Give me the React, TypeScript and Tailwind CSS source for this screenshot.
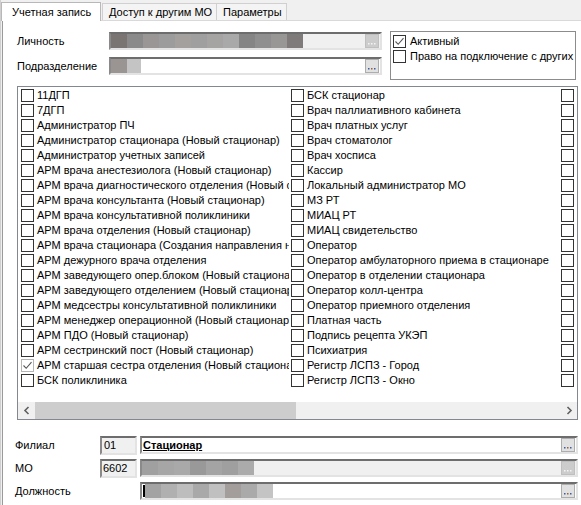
import React from "react";

const leftItems = [
  "11ДГП",
  "7ДГП",
  "Администратор ПЧ",
  "Администратор стационара (Новый стационар)",
  "Администратор учетных записей",
  "АРМ врача анестезиолога (Новый стационар)",
  "АРМ врача диагностического отделения (Новый стационар)",
  "АРМ врача консультанта (Новый стационар)",
  "АРМ врача консультативной поликлиники",
  "АРМ врача отделения (Новый стационар)",
  "АРМ врача стационара (Создания направления на госпитализацию)",
  "АРМ дежурного врача отделения",
  "АРМ заведующего опер.блоком (Новый стационар)",
  "АРМ заведующего отделением (Новый стационар)",
  "АРМ медсестры консультативной поликлиники",
  "АРМ менеджер операционной (Новый стационар)",
  "АРМ ПДО (Новый стационар)",
  "АРМ сестринский пост (Новый стационар)",
  "АРМ старшая сестра отделения (Новый стационар)",
  "БСК поликлиника",
];

const midItems = [
  "БСК стационар",
  "Врач паллиативного кабинета",
  "Врач платных услуг",
  "Врач стоматолог",
  "Врач хосписа",
  "Кассир",
  "Локальный администратор МО",
  "МЗ РТ",
  "МИАЦ РТ",
  "МИАЦ свидетельство",
  "Оператор",
  "Оператор амбулаторного приема в стационаре",
  "Оператор в отделении стационара",
  "Оператор колл-центра",
  "Оператор приемного отделения",
  "Платная часть",
  "Подпись рецепта УКЭП",
  "Психиатрия",
  "Регистр ЛСПЗ - Город",
  "Регистр ЛСПЗ - Окно",
];

const blurPerson = [
  "bg-[#7a7572]",
  "bg-[#8a8a8a]",
  "bg-[#9a9696]",
  "bg-[#9c9c9c]",
  "bg-[#a3a09e]",
  "bg-[#9f9f9f]",
  "bg-[#a6a4a2]",
  "bg-[#a9a9a9]",
  "bg-[#858585]",
  "bg-[#8f8f8f]",
  "bg-[#999696]",
  "bg-[#7e7b7a]",
];

const blurMO = [
  "bg-[#a0a0a0]",
  "bg-[#a6a6a6]",
  "bg-[#a9a9a9]",
  "bg-[#999999]",
  "bg-[#a4a4a4]",
  "bg-[#9f9f9f]",
  "bg-[#ababab]",
];

const blurPos = [
  "bg-[#a3a3a3]",
  "bg-[#b0b0b0]",
  "bg-[#bdbdbd]",
  "bg-[#a9a9a9]",
  "bg-[#c0c0c0]",
  "bg-[#a39e9b]",
  "bg-[#aaaaaa]",
  "bg-[#c4c4c4]",
];

function Box({ checked, light }: { checked?: boolean; light?: boolean }) {
  return (
    <span
      className={
        "w-[13px] h-[13px] border bg-white flex items-center justify-center shrink-0 " +
        (light ? "border-[#b5b5b5]" : "border-[#333333]")
      }
    >
      {checked && (
        <svg width="11" height="11" viewBox="0 0 11 11">
          <path d="M1.5 5.5 L4.2 8.3 L9.5 2.2" stroke="#555555" strokeWidth="1.1" fill="none" />
        </svg>
      )}
    </span>
  );
}

function Dots({ disabled }: { disabled?: boolean }) {
  return (
    <span
      className={
        "w-[14px] h-[14px] border flex items-end justify-center pb-[2px] shrink-0 " +
        (disabled ? "border-[#bfbfbf] bg-[#cccccc]" : "border-[#adadad] bg-[#e1e1e1]")
      }
    >
      <svg width="8" height="2" viewBox="0 0 8 2">
        <rect x="0" y="0" width="1.5" height="1.5" fill={disabled ? "#f4f4f4" : "#3a5fa0"} />
        <rect x="3" y="0" width="1.5" height="1.5" fill={disabled ? "#f4f4f4" : "#a06030"} />
        <rect x="6" y="0" width="1.5" height="1.5" fill={disabled ? "#f4f4f4" : "#3a5fa0"} />
      </svg>
    </span>
  );
}

const sunken =
  "border-2 border-t-[#6d6d6d] border-l-[#8a8a8a] border-b-[#e3e3e3] border-r-[#e3e3e3]";

function Column({ items, empty }: { items: string[]; empty?: boolean }) {
  return (
    <div className="w-[270px] shrink-0 overflow-hidden flex flex-col">
      {items.map((t, i) => (
        <div key={i} className="h-[15px] flex items-center whitespace-nowrap">
          <span className="ml-[2px]">
            <Box
              checked={!empty && t.startsWith("АРМ старшая")}
              light={!empty && t.startsWith("АРМ старшая")}
            />
          </span>
          <span className="ml-[3px]">{empty ? "" : t}</span>
        </div>
      ))}
    </div>
  );
}

export default function App() {
  return (
    <div className="w-[581px] h-[505px] overflow-hidden bg-[#f0f0f0] font-['Liberation_Sans',Arial,sans-serif] text-[11px] leading-[15px] text-black border-l border-l-[#cfcfcf]">
      {/* tab strip */}
      <div className="h-[21px] flex items-end border-b border-b-[#d9d9d9] w-[700px]">
        <div className="relative z-10 w-[100px] h-[19px] -mb-px bg-white border-t border-l border-r border-[#b8b8b8] flex items-center pl-[10px] whitespace-nowrap">
          Учетная запись
        </div>
        <div className="w-[115px] h-[17px] ml-[1px] bg-[#f4f4f4] border-t border-r border-l border-[#d0d0d0] flex items-center pl-[6px] whitespace-nowrap">
          Доступ к другим МО
        </div>
        <div className="w-[70px] h-[17px] bg-[#f4f4f4] border-t border-r border-[#d0d0d0] flex items-center pl-[6px] whitespace-nowrap">
          Параметры
        </div>
      </div>

      {/* tab page */}
      <div className="ml-[1px] w-[700px] h-[490px] bg-white border-l border-l-[#9a9a9a]">
        {/* top section */}
        <div className="flex pt-[10px] pl-[14px]">
          <div className="w-[365px] flex flex-col">
            <div className="mt-[1px] h-[18px] flex items-center">
              <span className="w-[92px]">Личность</span>
              <div className={"w-[273px] h-[18px] bg-[#f0f0f0] flex items-center " + sunken}>
                <div className="flex h-[14px]">
                  {blurPerson.map((c, i) => (
                    <span key={i} className={"w-[16px] h-[14px] " + c} />
                  ))}
                </div>
                <div className="flex-1" />
                <span className="mr-[1px]">
                  <Dots disabled />
                </span>
              </div>
            </div>
            <div className="mt-[7px] h-[18px] flex items-center">
              <span className="w-[92px]">Подразделение</span>
              <div className={"w-[273px] h-[18px] bg-white flex items-center " + sunken}>
                <span className="w-[16px] h-[14px] bg-[#9a9493]" />
                <span className="w-[14px] h-[14px] bg-[#c4c4c4]" />
                <div className="flex-1" />
                <span className="mr-[1px]">
                  <Dots />
                </span>
              </div>
            </div>
          </div>
          <div className="ml-[8px] w-[186px] h-[49px] border border-[#8c8c8c] overflow-hidden pt-[2px]">
            <div className="h-[15px] flex items-center whitespace-nowrap">
              <span className="ml-[2px]">
                <Box checked />
              </span>
              <span className="ml-[4px]">Активный</span>
            </div>
            <div className="h-[15px] flex items-center whitespace-nowrap">
              <span className="ml-[2px]">
                <Box />
              </span>
              <span className="ml-[4px]">Право на подключение с других МО</span>
            </div>
          </div>
        </div>

        {/* checked list box */}
        <div className="mt-[6px] ml-[14px] w-[561px] h-[334px] border border-[#828790] flex flex-col">
          <div className="h-[315px] overflow-hidden flex pl-[1px] pt-[1px]">
            <Column items={leftItems} />
            <Column items={midItems} />
            <Column items={midItems} empty />
          </div>
          <div className="h-[17px] bg-[#f0f0f0] flex items-center">
            <div className="w-[17px] h-[17px] flex items-center justify-center">
              <svg width="8" height="9" viewBox="0 0 8 9">
                <path d="M5.5 1 L2 4.5 L5.5 8" stroke="#606060" strokeWidth="1.6" fill="none" />
              </svg>
            </div>
            <div className="w-[261px] h-[17px] bg-[#cdcdcd]" />
            <div className="flex-1" />
            <div className="w-[17px] h-[17px] flex items-center justify-center">
              <svg width="8" height="9" viewBox="0 0 8 9">
                <path d="M2.5 1 L6 4.5 L2.5 8" stroke="#606060" strokeWidth="1.6" fill="none" />
              </svg>
            </div>
          </div>
        </div>

        {/* bottom fields */}
        <div className="mt-[16px] pl-[12px] flex flex-col gap-[5px]">
          <div className="h-[18px] flex items-center">
            <span className="w-[85px]">Филиал</span>
            <div className={"w-[37px] h-[19px] bg-[#f0f0f0] flex items-center pl-[2px] " + sunken}>01</div>
            <div className={"ml-[3px] w-[438px] h-[18px] bg-white flex items-center " + sunken}>
              <span className="font-bold underline pl-[1px]">Стационар</span>
              <div className="flex-1" />
              <span className="mr-[1px]">
                <Dots />
              </span>
            </div>
          </div>
          <div className="h-[18px] flex items-center">
            <span className="w-[85px]">МО</span>
            <div className={"w-[37px] h-[19px] bg-[#f0f0f0] flex items-center pl-[1px] " + sunken}>6602</div>
            <div className={"ml-[3px] w-[438px] h-[18px] bg-[#f0f0f0] flex items-center " + sunken}>
              <div className="flex h-[14px]">
                {blurMO.map((c, i) => (
                  <span key={i} className={"w-[16px] h-[14px] " + c} />
                ))}
              </div>
              <div className="flex-1" />
              <span className="mr-[1px]">
                <Dots disabled />
              </span>
            </div>
          </div>
          <div className="h-[18px] flex items-center">
            <span className="w-[125px]">Должность</span>
            <div className={"w-[438px] h-[18px] bg-white flex items-center " + sunken}>
              <span className="ml-[1px] w-[2px] h-[12px] bg-black" />
              <div className="flex h-[14px]">
                {blurPos.map((c, i) => (
                  <span key={i} className={"w-[16px] h-[14px] " + c} />
                ))}
              </div>
              <div className="flex-1" />
              <span className="mr-[1px]">
                <Dots />
              </span>
            </div>
          </div>
        </div>
      </div>
    </div>
  );
}
